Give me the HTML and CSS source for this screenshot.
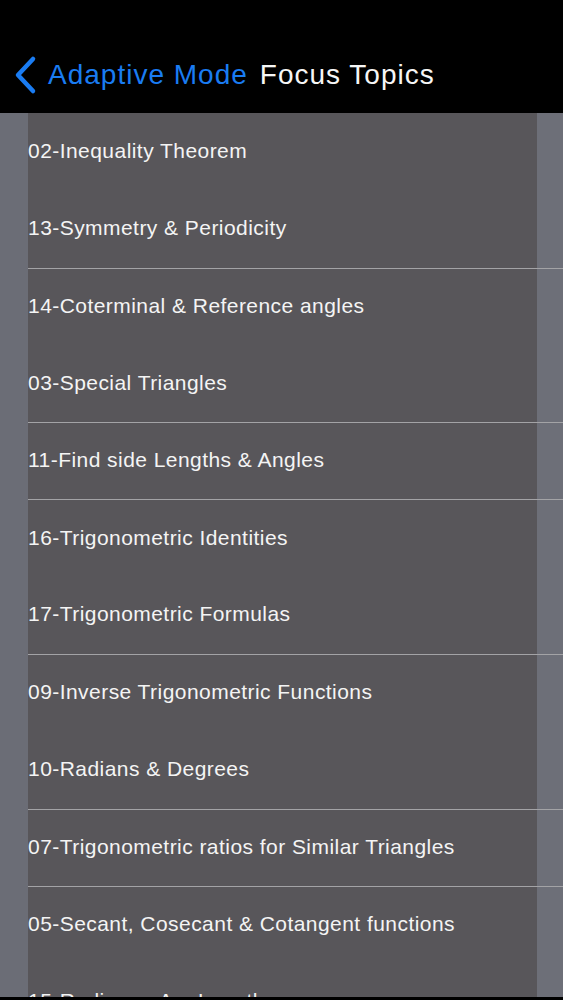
FILE: index.html
```html
<!DOCTYPE html>
<html>
<head>
<meta charset="utf-8">
<link rel="stylesheet" href="styles.css">
</head>
<body>
<div class="screen">
  <header class="nav">
    <div class="back">
      <svg class="chev" width="26" height="40" viewBox="0 0 26 40"><path d="M21 4 L6 20 L21 36" fill="none" stroke="#1a7cf2" stroke-width="4.5" stroke-linecap="round" stroke-linejoin="round"/></svg>
      <span class="back-label">Adaptive Mode</span>
    </div>
    <span class="title">Focus Topics</span>
  </header>
  <div class="body">
    <div class="strip-left"></div>
    <div class="list">
      <div class="row"><span class="cell">02-Inequality Theorem</span><span class="strip"></span></div>
      <div class="row"><span class="cell">13-Symmetry &amp; Periodicity</span><span class="strip"></span></div>
      <div class="row sep"><span class="cell">14-Coterminal &amp; Reference angles</span><span class="strip"></span></div>
      <div class="row"><span class="cell">03-Special Triangles</span><span class="strip"></span></div>
      <div class="row sep"><span class="cell">11-Find side Lengths &amp; Angles</span><span class="strip"></span></div>
      <div class="row sep"><span class="cell">16-Trigonometric Identities</span><span class="strip"></span></div>
      <div class="row"><span class="cell">17-Trigonometric Formulas</span><span class="strip"></span></div>
      <div class="row sep"><span class="cell">09-Inverse Trigonometric Functions</span><span class="strip"></span></div>
      <div class="row"><span class="cell">10-Radians &amp; Degrees</span><span class="strip"></span></div>
      <div class="row sep"><span class="cell">07-Trigonometric ratios for Similar Triangles</span><span class="strip"></span></div>
      <div class="row sep"><span class="cell">05-Secant, Cosecant &amp; Cotangent functions</span><span class="strip"></span></div>
      <div class="row"><span class="cell">15-Radians - Arc Length</span><span class="strip"></span></div>
    </div>
  </div>
  <div class="footer"></div>
</div>
</body>
</html>
```
FILE: styles.css
```css
html, body {
  margin: 0;
  padding: 0;
  background: #000;
}
.screen {
  width: 563px;
  height: 1000px;
  display: flex;
  flex-direction: column;
  overflow: hidden;
  font-family: "Liberation Sans", Arial, sans-serif;
}
.nav {
  height: 113px;
  flex: none;
  background: #000;
  display: flex;
  align-items: center;
  padding-top: 36px;
  box-sizing: border-box;
  gap: 12px;
}
.back {
  display: flex;
  align-items: center;
  margin-left: 12px;
  gap: 10px;
}
.chev {
  display: block;
}
.back-label {
  color: #1a7cf2;
  font-size: 28px;
  letter-spacing: 1px;
}
.title {
  color: #f6f6f6;
  font-size: 28px;
  letter-spacing: 1px;
}
.body {
  flex: 1;
  display: flex;
  overflow: hidden;
}
.strip-left {
  width: 28px;
  flex: none;
  background: #6b6d76;
}
.list {
  flex: 1;
  display: flex;
  flex-direction: column;
}
.row {
  height: 77.3px;
  flex: none;
  display: flex;
  box-sizing: border-box;
}
.row.sep {
  border-top: 1.5px solid #a3a3a6;
}
.cell {
  flex: 1;
  background: #58565a;
  color: #f4f4f4;
  font-size: 21px;
  letter-spacing: 0.45px;
  display: flex;
  align-items: center;
  padding-bottom: 2px;
}
.strip {
  width: 26px;
  flex: none;
  background: #6d6f78;
}
.footer {
  height: 3px;
  flex: none;
  background: #000;
}
```
